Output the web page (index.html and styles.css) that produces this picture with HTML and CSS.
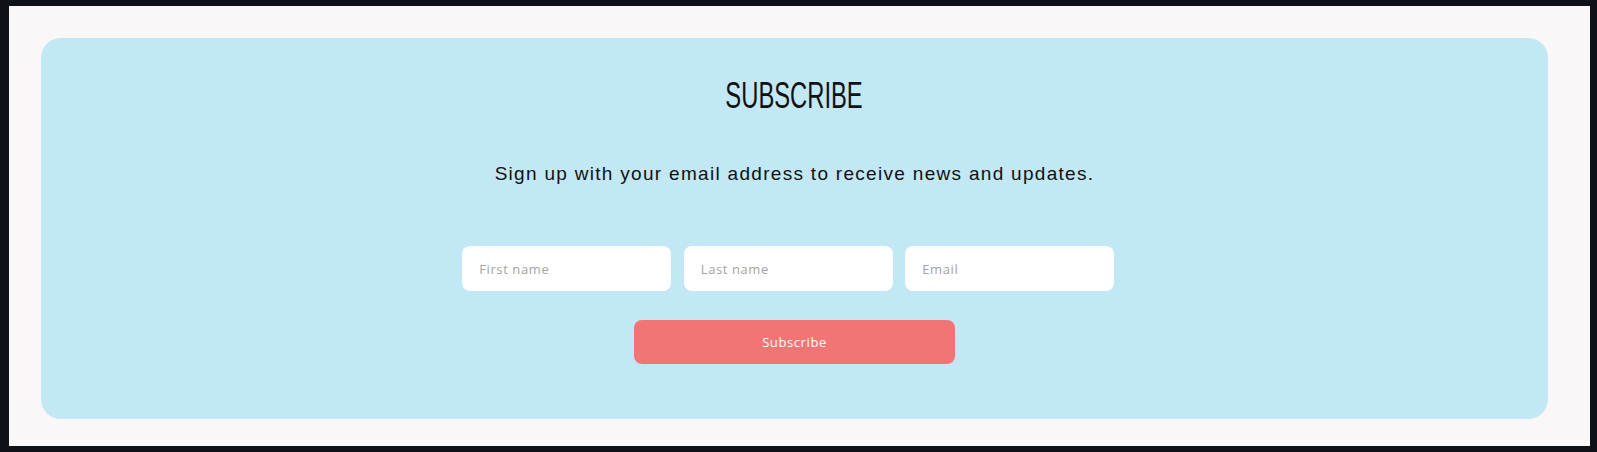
FILE: index.html
```html
<!DOCTYPE html>
<html>
<head>
<meta charset="utf-8">
<link rel="stylesheet" href="styles.css">
</head>
<body>
<div class="frame">
  <section class="card">
    <h2 class="title"><span>SUBSCRIBE</span></h2>
    <p class="lead">Sign up with your email address to receive news and updates.</p>
    <form class="form">
      <div class="fields">
        <input class="field" type="text" placeholder="First name">
        <input class="field" type="text" placeholder="Last name">
        <input class="field" type="email" placeholder="Email">
      </div>
      <button class="btn" type="button">Subscribe</button>
    </form>
  </section>
</div>
</body>
</html>
```

FILE: styles.css
```css
html, body {
  margin: 0;
  padding: 0;
}
body {
  background: #0e1118;
  width: 1597px;
  height: 452px;
  overflow: hidden;
}
.frame {
  box-sizing: border-box;
  margin: 6px 7px 0 9px;
  height: 440px;
  background: #f9f7f7;
  padding: 32px 42px 27px 32px;
}
.card {
  box-sizing: border-box;
  height: 381px;
  background: #c2e7f5;
  border-radius: 20px;
  padding-top: 36px;
  text-align: center;
}
.title {
  margin: 0;
  font-family: "Liberation Sans Narrow", "Liberation Sans", sans-serif;
  font-weight: normal;
  font-size: 36px;
  line-height: 44px;
  color: #111;
}
.title span {
  display: inline-block;
  transform: scaleX(0.66);
}
.lead {
  margin: 44px 0 0;
  font-family: "Liberation Sans", Arial, sans-serif;
  font-size: 19px;
  line-height: 24px;
  letter-spacing: 1.3px;
  color: #111;
}
.form {
  margin: 60px 0 0;
  display: flex;
  flex-direction: column;
  align-items: center;
}
.fields {
  display: flex;
}
.field {
  box-sizing: border-box;
  width: 209px;
  height: 45px;
  margin-right: 12.5px;
  border: none;
  border-radius: 8px;
  background: #fff;
  padding: 0 17px;
  font-family: "Open Sans", sans-serif;
  font-size: 13px;
  letter-spacing: 0.6px;
  color: #333;
  outline: none;
}
.field::placeholder {
  color: #a3a3a3;
}
.btn {
  margin-top: 29px;
  width: 321px;
  height: 44px;
  border: none;
  border-radius: 8px;
  background: #f27575;
  color: #fff;
  font-family: "Open Sans", sans-serif;
  font-size: 13px;
  letter-spacing: 0.6px;
  cursor: pointer;
}
```
